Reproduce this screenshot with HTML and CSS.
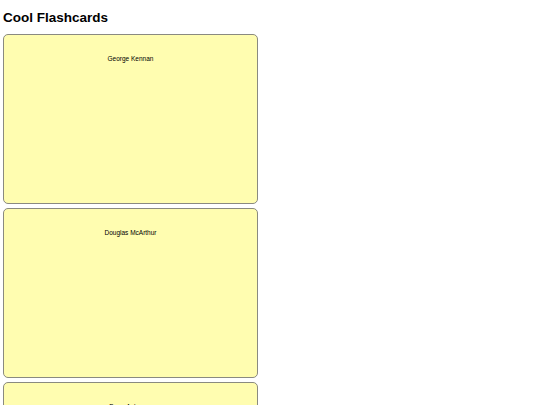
FILE: index.html
```html
<!DOCTYPE html>
<html>
<head>
<meta charset="utf-8">
<link rel="stylesheet" href="styles.css">
</head>
<body>
<h1 class="title">Cool Flashcards</h1>
<div class="deck">
  <div class="card"><p class="term">George Kennan</p></div>
  <div class="card"><p class="term">Douglas McArthur</p></div>
  <div class="card"><p class="term">Dean Acheson</p></div>
</div>
</body>
</html>
```
FILE: styles.css
```css
html, body {
  background: #ffffff;
}
body {
  margin: 3px;
  font-family: "Liberation Sans", Arial, sans-serif;
  color: #000;
}
.title {
  font-size: 13.5px;
  font-weight: bold;
  margin: 7px 0 9px 0;
  line-height: 15px;
}
.deck {
  display: flex;
  flex-direction: column;
  gap: 4px;
}
.card {
  box-sizing: border-box;
  width: 255px;
  height: 170px;
  flex: none;
  border: 1px solid #8a8a80;
  border-radius: 5px;
  background: #fffdb0;
  padding-top: 20px;
}
.term {
  margin: 0;
  text-align: center;
  font-size: 6.5px;
  line-height: 8px;
}
```
